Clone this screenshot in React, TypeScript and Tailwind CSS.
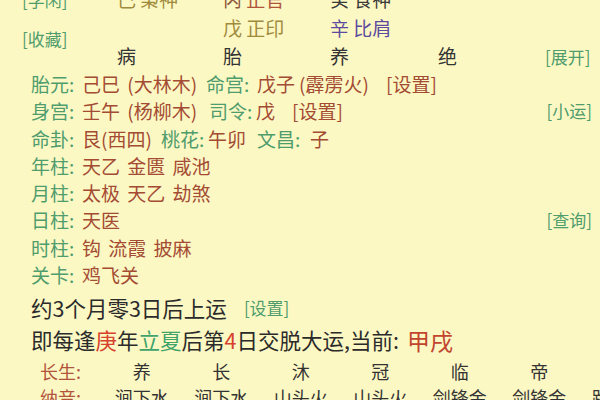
const green = 'text-[#4f9c6c]'
const brown = 'text-[#a44b33]'

type Part = { t: string; c: string; w?: string }

function Line({ parts, right }: { parts: Part[]; right?: string }) {
  return (
    <div className="flex h-[27.3px] items-center justify-between pl-[31px] pr-[8px] leading-[27.3px] whitespace-nowrap">
      <div className="flex text-[19px] [word-spacing:3px]">
        {parts.map((p, i) => (
          <span key={i} className={`${p.c} ${p.w ?? ''} shrink-0`}>
            {p.t}
          </span>
        ))}
      </div>
      {right ? <span className={`text-[17px] ${green}`}>{right}</span> : null}
    </div>
  )
}

const changsheng = ['养', '长', '沐', '冠', '临', '帝', '衰']
const nayin = ['涧下水', '涧下水', '山头火', '山头火', '剑锋金', '剑锋金', '路旁土']

export default function App() {
  return (
    <div
      className="h-[400px] w-[600px] overflow-hidden bg-[#fcf8c4] text-[#333]"
      style={{ fontFamily: '"Noto Sans CJK SC", "Noto Sans", sans-serif' }}
    >
      <div className="-mt-[15px] grid grid-cols-[95px_106px_107px_108px_107px_auto] grid-rows-[29px_29px_27px] pl-[22px] text-[19px] whitespace-nowrap">
        <div className={`flex items-center text-[17px] ${green}`}>[学闲]</div>
        <div className="flex items-center text-[#a08a3c]">己 枭神</div>
        <div className="flex items-center">
          <span className="text-[#8f5a3c]">丙</span>
          <span className="text-[#b0553a]">&nbsp;正官</span>
        </div>
        <div className="flex items-center text-[#3a3a3a]">癸 食神</div>
        <div />
        <div />

        <div className={`row-span-2 flex items-center pb-[7px] text-[17px] ${green}`}>[收藏]</div>
        <div />
        <div className="flex items-center text-[#a08a3c]">戊 正印</div>
        <div className="flex items-center text-[#5b4a9e]">辛 比肩</div>
        <div />
        <div />

        <div className="flex items-center">病</div>
        <div className="flex items-center">胎</div>
        <div className="flex items-center">养</div>
        <div className="flex items-center">绝</div>
        <div className={`flex items-center text-[17px] ${green}`}>[展开]</div>
      </div>

      <Line
        parts={[
          { t: '胎元:', c: green, w: 'w-[51px]' },
          { t: '己巳 (大林木)', c: brown, w: 'w-[124px]' },
          { t: '命宫:', c: green, w: 'w-[51px]' },
          { t: '戊子', c: brown, w: 'w-[42px]' },
          { t: '(霹雳火)', c: brown, w: 'w-[87px]' },
          { t: '[设置]', c: brown },
        ]}
      />
      <Line
        parts={[
          { t: '身宫:', c: green, w: 'w-[51px]' },
          { t: '壬午 (杨柳木)', c: brown, w: 'w-[127px]' },
          { t: '司令:', c: green, w: 'w-[47px]' },
          { t: '戊', c: brown, w: 'w-[36px]' },
          { t: '[设置]', c: brown },
        ]}
        right="[小运]"
      />
      <Line
        parts={[
          { t: '命卦:', c: green, w: 'w-[51px]' },
          { t: '艮(西四)', c: brown, w: 'w-[79px]' },
          { t: '桃花:', c: green, w: 'w-[47px]' },
          { t: '午卯', c: brown, w: 'w-[49px]' },
          { t: '文昌:', c: green, w: 'w-[53px]' },
          { t: '子', c: brown },
        ]}
      />
      <Line parts={[{ t: '年柱:', c: green, w: 'w-[51px]' }, { t: '天乙 金匮 咸池', c: brown }]} />
      <Line parts={[{ t: '月柱:', c: green, w: 'w-[51px]' }, { t: '太极 天乙 劫煞', c: brown }]} />
      <Line parts={[{ t: '日柱:', c: green, w: 'w-[51px]' }, { t: '天医', c: brown }]} right="[查询]" />
      <Line parts={[{ t: '时柱:', c: green, w: 'w-[51px]' }, { t: '钩 流霞 披麻', c: brown }]} />
      <Line parts={[{ t: '关卡:', c: green, w: 'w-[51px]' }, { t: '鸡飞关', c: brown }]} />

      <div className="mt-[3.6px] flex h-[32px] items-center pl-[31px] text-[21.5px] whitespace-nowrap text-[#2b2b2b]">
        约3个月零3日后上运
        <span className={`ml-[17px] text-[17px] ${green}`}>[设置]</span>
      </div>
      <div className="flex h-[32px] items-center pl-[31px] text-[21.5px] whitespace-nowrap text-[#2b2b2b]">
        即每逢<span className="text-[#d8412d]">庚</span>年
        <span className="text-[#3fa36b]">立夏</span>后第
        <span className="text-[#d8412d]">4</span>日交脱大运,当前:
        <span className="ml-[8px] text-[23px] text-[#c2452f]">甲戌</span>
      </div>

      <div className="mt-[3px] flex h-[26px] items-center pl-[40px] text-[18px] whitespace-nowrap">
        <div className="w-[62px] shrink-0 text-[#b2533b]">长生:</div>
        {changsheng.map((c, i) => (
          <div key={i} className="w-[79.5px] shrink-0 text-center">
            {c}
          </div>
        ))}
      </div>
      <div className="flex h-[26px] items-center pl-[40px] text-[18px] whitespace-nowrap">
        <div className="w-[62px] shrink-0 text-[#b2533b]">纳音:</div>
        {nayin.map((c, i) => (
          <div key={i} className="w-[79.5px] shrink-0 text-center">
            {c}
          </div>
        ))}
      </div>
    </div>
  )
}
